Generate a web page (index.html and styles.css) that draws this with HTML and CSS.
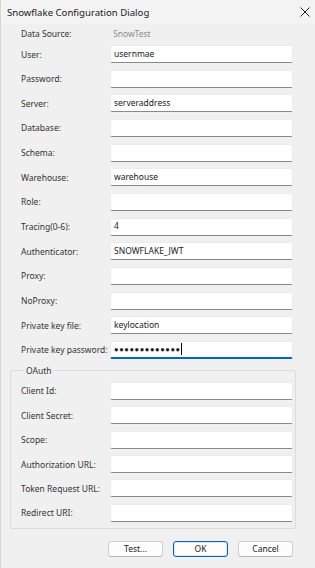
FILE: index.html
```html
<!DOCTYPE html>
<html lang="en">
<head>
    <meta charset="UTF-8">
    <meta name="viewport" content="width=device-width, initial-scale=1.0">
    <title>Snowflake Configuration Dialog</title>
    <link rel="stylesheet" href="styles.css">
</head>
<body>
    <div class="dialog">
        <div class="titlebar">
            <span class="title">Snowflake Configuration Dialog</span>
            <svg class="close" width="10" height="10" viewBox="0 0 10 10">
                <path d="M0.5 0.5 L9.5 9.5 M9.5 0.5 L0.5 9.5" stroke="#1f1f1f" stroke-width="1"/>
            </svg>
        </div>

        <div class="form">
            <div class="row source">
                <label>Data Source:</label>
                <span class="source-name">SnowTest</span>
            </div>
            <div class="row"><label>User:</label><div class="edit">usernmae</div></div>
            <div class="row"><label>Password:</label><div class="edit"></div></div>
            <div class="row"><label>Server:</label><div class="edit">serveraddress</div></div>
            <div class="row"><label>Database:</label><div class="edit"></div></div>
            <div class="row"><label>Schema:</label><div class="edit"></div></div>
            <div class="row"><label>Warehouse:</label><div class="edit">warehouse</div></div>
            <div class="row"><label>Role:</label><div class="edit"></div></div>
            <div class="row"><label>Tracing(0-6):</label><div class="edit">4</div></div>
            <div class="row"><label>Authenticator:</label><div class="edit">SNOWFLAKE_JWT</div></div>
            <div class="row"><label>Proxy:</label><div class="edit"></div></div>
            <div class="row"><label>NoProxy:</label><div class="edit"></div></div>
            <div class="row"><label>Private key file:</label><div class="edit">keylocation</div></div>
            <div class="row">
                <label>Private key password:</label>
                <div class="edit focused"><span class="dots">&#9679;&#9679;&#9679;&#9679;&#9679;&#9679;&#9679;&#9679;&#9679;&#9679;&#9679;&#9679;&#9679;</span><span class="caret"></span></div>
            </div>
        </div>

        <fieldset class="group">
            <legend>OAuth</legend>
            <div class="row"><label>Client Id:</label><div class="edit"></div></div>
            <div class="row"><label>Client Secret:</label><div class="edit"></div></div>
            <div class="row"><label>Scope:</label><div class="edit"></div></div>
            <div class="row"><label>Authorization URL:</label><div class="edit"></div></div>
            <div class="row"><label>Token Request URL:</label><div class="edit"></div></div>
            <div class="row"><label>Redirect URI:</label><div class="edit"></div></div>
        </fieldset>

        <div class="buttons">
            <button>Test...</button>
            <button class="default">OK</button>
            <button>Cancel</button>
        </div>
    </div>
</body>
</html>
```

FILE: styles.css
```css
body {
    margin: 0;
    font-family: "Noto Sans", "Open Sans", sans-serif;
    font-size: 8.5px;
    color: #1f1f1f;
    background-color: #f0f0f0;
}
.dialog {
    width: 315px;
    height: 568px;
    box-sizing: border-box;
    border-left: 1px solid #d6d6d6;
    background-color: #f0f0f0;
    overflow: hidden;
}
.titlebar {
    height: 24px;
    display: flex;
    align-items: center;
    justify-content: space-between;
    padding: 0 5px 0 6px;
    background-color: #f3f3f3;
}
.title {
    font-size: 9.6px;
    color: #1a1a1a;
}
.form {
    padding: 0 22px 0 20px;
    display: flex;
    flex-direction: column;
    gap: 6.67px;
}
.row {
    display: flex;
    align-items: center;
    height: 18px;
}
.row.source {
    margin-bottom: -3.67px;
}
label {
    width: 89px;
    flex-shrink: 0;
    color: #333;
    white-space: nowrap;
}
.source-name {
    padding-left: 3px;
    color: #8c8c8c;
}
.edit {
    flex: 1;
    height: 18px;
    box-sizing: border-box;
    display: flex;
    align-items: center;
    padding: 0 3px 2px;
    background-color: #fff;
    border: 1px solid #ececec;
    border-bottom-color: #8a8a8a;
    border-radius: 2px;
    color: #1a1a1a;
    white-space: nowrap;
}
.edit.focused {
    border-bottom: 2px solid #0067c0;
    padding-bottom: 1px;
}
.dots {
    font-size: 7.5px;
    letter-spacing: 0.6px;
}
.caret {
    width: 1px;
    height: 12px;
    background-color: #000;
}
.group {
    margin: 5px 19px 0 9px;
    padding: 5px 2px 6px 10px;
    border: 1px solid #dcdcdc;
    border-radius: 2px;
    display: flex;
    flex-direction: column;
    gap: 6.4px;
}
.group legend {
    padding: 0 2px;
    margin-left: 3px;
    color: #333;
    line-height: 13px;
}
.buttons {
    display: flex;
    justify-content: flex-end;
    gap: 10px;
    padding: 12px 22px 0 0;
}
button {
    width: 55px;
    height: 16px;
    padding: 0;
    font-family: inherit;
    font-size: 8.5px;
    color: #1a1a1a;
    background-color: #fdfdfd;
    border: 1px solid #d0d0d0;
    border-bottom-color: #b8b8b8;
    border-radius: 3px;
}
button.default {
    border: 1px solid #0067c0;
    box-shadow: inset 0 0 0 1px #d8e8f8;
}
```
